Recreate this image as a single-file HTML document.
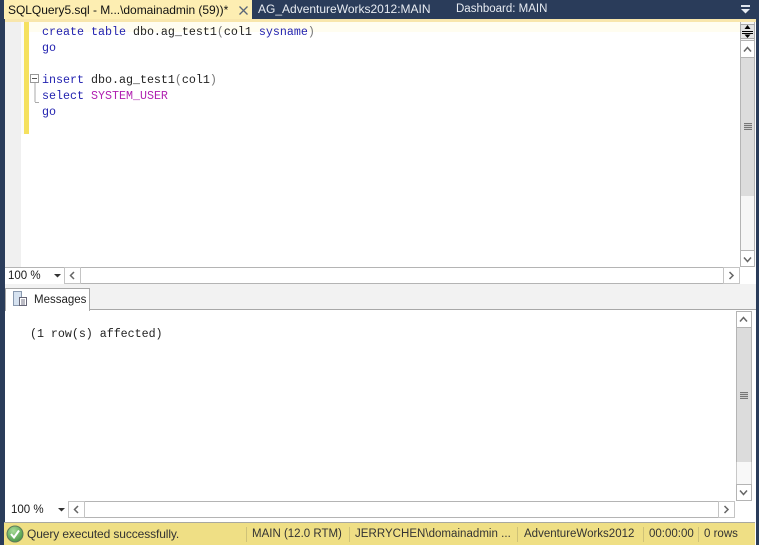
<!DOCTYPE html>
<html><head><meta charset="utf-8"><style>
html,body{margin:0;padding:0}
body{width:759px;height:545px;position:relative;overflow:hidden;background:#2a3c5a;font-family:"Liberation Sans",sans-serif;color:#1a1a1a}
div,span,svg{position:absolute;white-space:pre}
.m{font:11.67px/16px "Liberation Mono",monospace;color:#222}
.k{position:static;color:#2222b0}.p{position:static;color:#b020b0}.g{position:static;color:#777}
.t{font-size:12px;line-height:16px}
.sb{background:#fff;border:1px solid #b4b4b4;box-sizing:border-box}
.track{background:#dcdcdc;border:1px solid #b4b4b4;border-width:0 1px;box-sizing:border-box}
.grip{width:8px;height:7px;background:repeating-linear-gradient(#777 0 1px,#ccc 1px 2px)}
svg.a{fill:none;stroke:#666;stroke-width:1.5}
</style></head><body>
<!-- tab bar -->
<div style="left:4px;top:0;width:248px;height:19px;background:#fdeeb2"></div>
<div class="t" style="left:8px;top:2px;color:#111;font-size:12px;letter-spacing:-.03px">SQLQuery5.sql - M...\domainadmin (59))*</div>
<svg style="left:238px;top:5px" width="11" height="11" viewBox="0 0 11 11"><path d="M1.500 1.500L9.500 9.500M9.500 1.500L1.500 9.500" stroke="#5a6678" stroke-width="1.300"/></svg>
<div class="t" style="left:258px;top:1px;color:#e8ecf2">AG_AdventureWorks2012:MAIN</div>
<div class="t" style="left:456px;top:1px;color:#e8ecf2;font-size:11.5px">Dashboard: MAIN</div>
<div style="left:741px;top:5px;width:9px;height:2px;background:#dfe5ee"></div>
<svg style="left:741px;top:9px" width="9" height="5"><path d="M0 0H9L4.500 4.500Z" fill="#e8edf4"/></svg>
<!-- main -->
<div style="left:5px;top:19px;width:751px;height:526px;background:#fff"></div>
<div style="left:5px;top:19px;width:751px;height:3px;background:#f8e6ac"></div>
<div style="left:5px;top:22px;width:735px;height:10px;background:#fffdf0"></div>
<div style="left:5px;top:22px;width:16px;height:245px;background:#f0f0f0"></div>
<div style="left:21px;top:22px;width:3px;height:112px;background:#fbfbfb"></div>
<div style="left:24px;top:22px;width:5px;height:112px;background:#f5e15f"></div>
<!-- code -->
<div class="m" style="left:42px;top:24px"><span class="k">create table</span> dbo.ag_test1<span class="g">(</span>col1 <span class="k">sysname</span><span class="g">)</span></div>
<div class="m" style="left:42px;top:40px"><span class="k">go</span></div>
<div class="m" style="left:42px;top:72px"><span class="k">insert</span> dbo.ag_test1<span class="g">(</span>col1<span class="g">)</span></div>
<div class="m" style="left:42px;top:88px"><span class="k">select</span> <span class="p">SYSTEM_USER</span></div>
<div class="m" style="left:42px;top:104px"><span class="k">go</span></div>
<!-- fold -->
<svg style="left:30px;top:74px" width="11" height="30"><rect x=".5" y=".5" width="8" height="8" fill="#fff" stroke="#999"/><path d="M2 4.500H7" stroke="#555"/><path d="M5 9V28" stroke="#aaa"/><path d="M5 28.500H9" stroke="#aaa"/></svg>
<!-- top scrollbar -->
<div style="left:740px;top:22px;width:15px;height:245px;background:#f6f6f6;border:solid #b4b4b4;border-width:0 1px;box-sizing:border-box"></div>
<div style="left:740px;top:24px;width:15px;height:15px;background:#e4e4e4;border:1px solid #aaa;box-sizing:border-box"></div>
<svg style="left:741px;top:24px" width="13" height="15"><path d="M1 7.500H12" stroke="#000"/><path d="M1 9.500H12" stroke="#000"/><path d="M6.500 1L3.500 5H9.500ZM6.500 14L3.500 10.500H9.500Z" fill="#000"/></svg>
<div class="sb" style="left:740px;top:40px;width:15px;height:18px"></div>
<svg class="a" style="left:743px;top:46px" width="10" height="7"><path d="M1 5.500L4.500 1.500L8 5.500"/></svg>
<div class="track" style="left:740px;top:58px;width:15px;height:138px"></div>
<div class="grip" style="left:744px;top:123px"></div>
<div class="sb" style="left:740px;top:250px;width:15px;height:17px"></div>
<svg class="a" style="left:743px;top:256px" width="10" height="7"><path d="M1 1.500L4.500 5.500L8 1.500"/></svg>
<!-- top hscroll -->
<div style="left:5px;top:267px;width:735px;height:17px;background:#fff;border-top:1px solid #b4b4b4;box-sizing:border-box"></div>
<div class="t" style="left:8px;top:268px;font-size:11.5px">100 %</div>
<svg style="left:54px;top:274px" width="7" height="4"><path d="M0 0H7L3.500 3.500Z" fill="#333"/></svg>
<div style="left:64px;top:267px;width:17px;height:17px;border:1px solid #c4c4c4;box-sizing:border-box"></div>
<svg class="a" style="left:69px;top:271px" width="7" height="10"><path d="M5 1L1.500 4.500L5 8"/></svg>
<div style="left:81px;top:267px;width:642px;height:17px;border-bottom:1px solid #b4b4b4;box-sizing:border-box"></div>
<div style="left:723px;top:267px;width:17px;height:17px;border:1px solid #c4c4c4;box-sizing:border-box"></div>
<svg class="a" style="left:728px;top:271px" width="7" height="10"><path d="M1.500 1L5 4.500L1.500 8"/></svg>
<!-- tabs strip -->
<div style="left:5px;top:284px;width:751px;height:26px;background:#f2f2f2;border-bottom:1px solid #a8a8a8;box-sizing:border-box"></div>
<div style="left:5px;top:288px;width:85px;height:23px;background:#fff;border:1px solid #a8a8a8;border-bottom:0;box-sizing:border-box"></div>
<svg style="left:13px;top:290px" width="15" height="17"><rect x=".5" y="1.500" width="8" height="14" fill="#d6e2f0" stroke="#8a9ab0"/><rect x="6.500" y="7.500" width="7" height="8" fill="#fff" stroke="#667"/><path d="M8 10H12M8 12H12M8 14H12" stroke="#778"/></svg>
<div class="t" style="left:34px;top:292px;font-size:11.5px;color:#222">Messages</div>
<div class="m" style="left:30px;top:326px;letter-spacing:-.02px">(1 row(s) affected)</div>
<!-- bottom scrollbar -->
<div class="sb" style="left:736px;top:311px;width:16px;height:17px"></div>
<svg class="a" style="left:739px;top:316px" width="10" height="7"><path d="M1 5.500L4.500 1.500L8 5.500"/></svg>
<div class="track" style="left:736px;top:328px;width:16px;height:134px"></div>
<div class="grip" style="left:740px;top:392px"></div>
<div style="left:736px;top:462px;width:16px;height:22px;background:#f8f8f8;border:1px solid #c8c8c8;border-width:0 1px;box-sizing:border-box"></div>
<div class="sb" style="left:736px;top:484px;width:16px;height:17px"></div>
<svg class="a" style="left:739px;top:489px" width="10" height="7"><path d="M1 1.500L4.500 5.500L8 1.500"/></svg>
<!-- bottom hscroll -->
<div style="left:5px;top:501px;width:751px;height:21px;background:#fff"></div>
<div class="t" style="left:11px;top:502px;font-size:11.5px">100 %</div>
<svg style="left:58px;top:508px" width="7" height="4"><path d="M0 0H7L3.500 3.500Z" fill="#333"/></svg>
<div style="left:68px;top:501px;width:17px;height:17px;border:1px solid #c4c4c4;box-sizing:border-box"></div>
<svg class="a" style="left:73px;top:505px" width="7" height="10"><path d="M5 1L1.500 4.500L5 8"/></svg>
<div style="left:85px;top:501px;width:633px;height:17px;border:solid #b4b4b4;border-width:1px 0;box-sizing:border-box"></div>
<div style="left:718px;top:501px;width:17px;height:17px;border:1px solid #c4c4c4;background:#fff;box-sizing:border-box"></div>
<svg class="a" style="left:723px;top:505px" width="7" height="10"><path d="M1.500 1L5 4.500L1.500 8"/></svg>
<!-- status -->
<div style="left:4px;top:522px;width:751px;height:23px;background:#efdf85;border-top:1px solid #a8a8a0;box-sizing:border-box"></div>
<svg style="left:6px;top:525px" width="18" height="18"><defs><radialGradient id="c" cx=".4" cy=".3" r=".8"><stop offset="0" stop-color="#a8dc98"/><stop offset="1" stop-color="#3f8f3c"/></radialGradient></defs><circle cx="9" cy="9" r="8" fill="url(#c)" stroke="#5d7a5a"/><path d="M5 9L8 12.500L13 5.500" fill="none" stroke="#fff" stroke-width="2"/></svg>
<div class="t" style="left:27px;top:526px;font-size:12px;color:#333;letter-spacing:-.11px">Query executed successfully.</div>
<div style="left:246px;top:527px;width:1px;height:15px;background:#cfc278"></div>
<div class="t" style="left:252px;top:526px;font-size:11.5px;color:#333">MAIN (12.0 RTM)</div>
<div style="left:349px;top:527px;width:1px;height:15px;background:#cfc278"></div>
<div class="t" style="left:355px;top:526px;font-size:11.5px;color:#333;letter-spacing:.03px">JERRYCHEN\domainadmin ...</div>
<div style="left:517px;top:527px;width:1px;height:15px;background:#cfc278"></div>
<div class="t" style="left:524px;top:526px;font-size:11.5px;color:#333">AdventureWorks2012</div>
<div style="left:643px;top:527px;width:1px;height:15px;background:#cfc278"></div>
<div class="t" style="left:649px;top:526px;font-size:11.5px;color:#333">00:00:00</div>
<div style="left:698px;top:527px;width:1px;height:15px;background:#cfc278"></div>
<div class="t" style="left:704px;top:526px;font-size:11.5px;color:#333">0 rows</div>
</body></html>
